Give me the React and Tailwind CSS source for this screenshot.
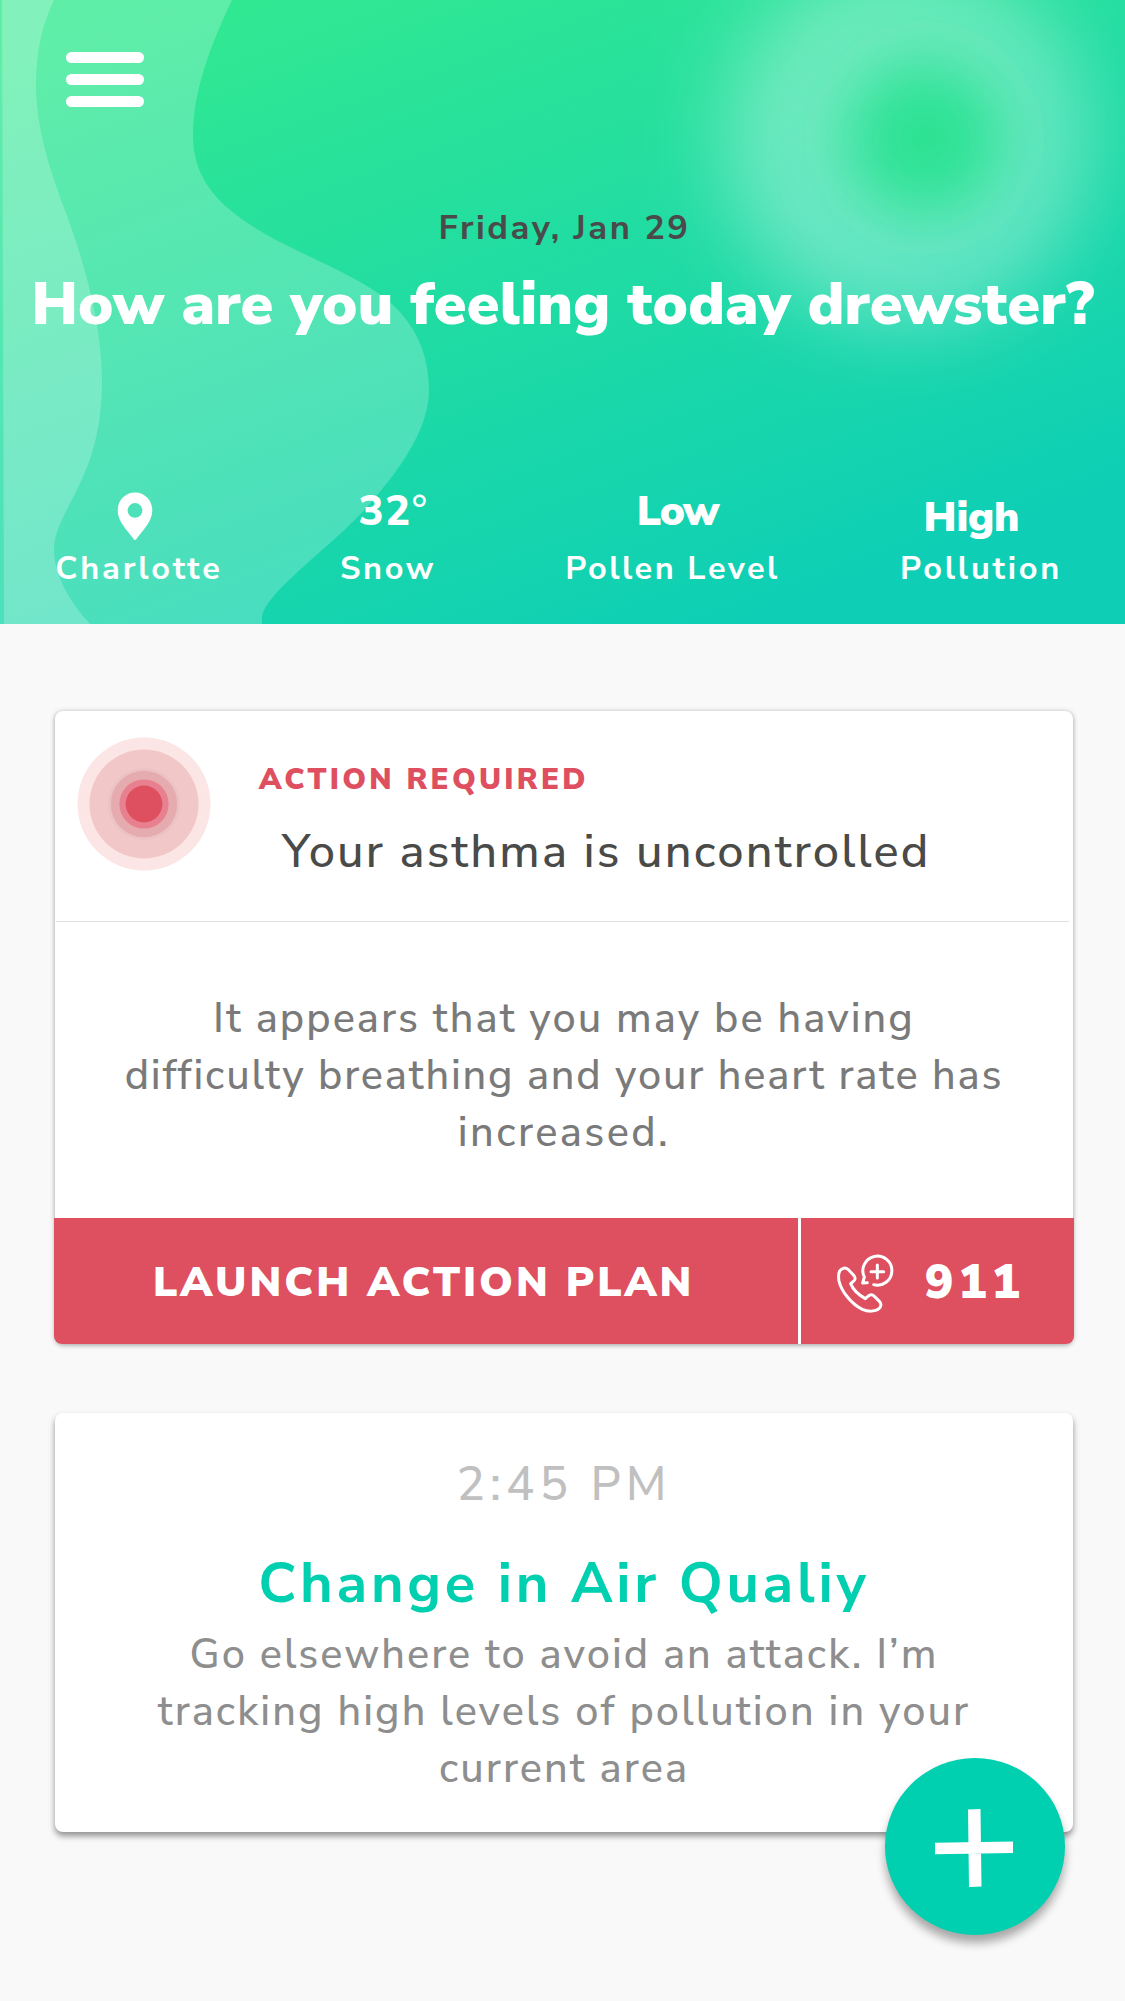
import React from "react";

function HeaderArt() {
  return (
    <svg className="absolute inset-0" width="1125" height="624" viewBox="0 0 1125 624" aria-hidden="true">
      <defs>
        <filter id="haloBlur" x="-60%" y="-60%" width="220%" height="220%">
          <feGaussianBlur stdDeviation="42" />
        </filter>
        <filter id="coreBlur" x="-100%" y="-100%" width="300%" height="300%">
          <feGaussianBlur stdDeviation="33" />
        </filter>
      </defs>
      <path
        d="M232 0C212 42 193 90 193 135C193 185 225 214 286 245C330 267 366 281 393 305C414 325 429 352 429 390C429 425 405 462 379 493C340 543 262 592 262 619L262 624L0 624L0 0Z"
        fill="#fff"
        fillOpacity="0.22"
      />
      <path
        d="M54 0C42 25 36 52 36 83C36 130 50 170 66 213C85 265 102 325 102 382C102 480 54 510 54 550C54 575 70 602 90 624L4 624L2 0Z"
        fill="#fff"
        fillOpacity="0.22"
      />
      <circle cx="905" cy="142" r="182" fill="#fff" fillOpacity="0.35" filter="url(#haloBlur)" />
      <circle cx="925" cy="138" r="78" fill="#2be293" filter="url(#coreBlur)" />
    </svg>
  );
}

function PinIcon() {
  return (
    <svg width="36" height="50" viewBox="0 0 36 50" aria-hidden="true">
      <path
        fillRule="evenodd"
        fill="#fff"
        d="M18 1.5C8.3 1.5 .7 9.3 .7 19.4C.7 31 11 39.500 16.600 48C17.300 49.200 18.700 49.200 19.400 48C25 39.500 35.300 31 35.300 19.400C35.300 9.300 27.700 1.500 18 1.500ZM18 12A7.400 7.400 0 1 1 18 26.800A7.400 7.400 0 1 1 18 12Z"
      />
    </svg>
  );
}

function PhoneIcon() {
  return (
    <svg
      width="80"
      height="84"
      viewBox="0 0 240 252"
      fill="none"
      stroke="#fff"
      strokeWidth="9"
      strokeLinecap="round"
      strokeLinejoin="round"
      aria-hidden="true"
      className="mt-[3px]"
    >
      <path d="M44 90C50 80 62 79 69 85L86 103C93 111 91 117 84 122L77 128C84 146 98 160 121 173L130 165C136 160 143 161 148 166L164 182C170 189 168 198 162 203C150 213 128 212 112 205C80 190 48 150 42 120C40 108 40 98 44 90Z" />
      <path d="M146 131A43.500 43.500 0 1 0 118 108L113 126L127 125" />
      <path d="M157 72V111M138 92H176" />
    </svg>
  );
}

function Pulse() {
  return (
    <svg width="134" height="134" viewBox="-67 -67 134 134" aria-hidden="true">
      <circle r="66.5" fill="#fbe5e5" />
      <circle r="54.5" fill="#f2c7c8" />
      <circle r="36" fill="#ecc3c5" />
      <circle r="33.300" fill="#e6abae" />
      <circle r="24.600" fill="#e9808f" />
      <circle r="18.400" fill="#de4f5f" />
    </svg>
  );
}

export default function App() {
  return (
    <div className="relative flex h-[2001px] w-[1125px] flex-col overflow-hidden bg-[#f9f9f9] font-['Nunito_Sans',Lato,sans-serif] whitespace-nowrap">
      <header className="relative h-[624px] bg-[linear-gradient(160deg,#33e990_5%,#0ecfb5_86%)] text-white">
        <HeaderArt />
        <div className="relative flex flex-col pt-[52px]">
          <button className="ml-[66px] flex w-[78px] flex-col gap-[11px]" aria-label="Menu">
            <span className="h-[11px] w-full rounded-full bg-white" />
            <span className="h-[11px] w-full rounded-full bg-white" />
            <span className="h-[11px] w-full rounded-full bg-white" />
          </button>
          <p className="mt-[101px] pl-[4px] text-center text-[34.5px] leading-[40px] font-bold tracking-[2.500px] text-[#4a4a4a]">
            Friday, Jan 29
          </p>
          <h1 className="mt-[17px] pl-[1px] text-center text-[59px] leading-[80px] font-black tracking-[0.22px]">
            How are you feeling today drewster?
          </h1>
          <div className="mt-[141px] flex text-center">
            <div className="flex w-[276px] flex-col gap-3 pl-[2px]">
              <div className="flex h-[50px] justify-center pt-[5px] pr-[8px]">
                <PinIcon />
              </div>
              <p className="text-[32.5px] leading-[40px] font-bold tracking-[2.850px]">Charlotte</p>
            </div>
            <div className="flex w-[222px] flex-col gap-3">
              <p className="pt-px pl-[13px] text-[42px] leading-[50px] font-extrabold tracking-[1.300px]">
                32<span className="font-medium">°</span>
              </p>
              <p className="-mt-px pl-[2px] text-[32.5px] leading-[40px] font-bold tracking-[2.600px]">Snow</p>
            </div>
            <div className="flex w-[348px] flex-col gap-3">
              <p className="pt-px pl-[11px] text-[42px] leading-[50px] font-black tracking-[-1.400px]">Low</p>
              <p className="-mt-px pl-[1px] text-[32.5px] leading-[40px] font-bold tracking-[2.450px]">Pollen Level</p>
            </div>
            <div className="flex w-[268px] flex-col gap-3">
              <p className="pt-[7px] pr-[17px] text-[42px] leading-[50px] font-black tracking-[-0.200px]">High</p>
              <p className="-mt-[7px] pl-[2px] text-[32.5px] leading-[40px] font-bold tracking-[2.750px]">Pollution</p>
            </div>
          </div>
        </div>
      </header>

      <section className="mt-[87px] mr-[52px] ml-[55px] flex h-[633px] flex-col rounded-lg bg-white shadow-[0_1px_5px_rgba(0,0,0,0.38)]">
        <div className="flex h-[210px]">
          <div className="pt-[26px] pl-[22px]">
            <Pulse />
          </div>
          <div className="pt-[50px] pl-[48px]">
            <p className="text-[29.5px] leading-[36px] font-black tracking-[3.250px] text-[#de4f5f]">
              ACTION REQUIRED
            </p>
            <h2 className="mt-[25px] pl-[23px] text-[47px] leading-[60px] font-medium tracking-[2.150px] text-[#4a4a48]">
              Your asthma is uncontrolled
            </h2>
          </div>
        </div>
        <hr className="mr-[4px] ml-px border-t-[1.500px] border-[#e0e0e0]" />
        <p className="mt-[68px] text-center text-[41.500px] leading-[57px] font-medium text-[#7a7a7a]">
          <span className="block tracking-[2.030px]">It appears that you may be having</span>
          <span className="block tracking-[1.790px]">difficulty breathing and your heart rate has</span>
          <span className="block tracking-[2.400px]">increased.</span>
        </p>
        <div className="-mx-px mt-auto flex h-[126px] overflow-hidden rounded-b-lg bg-[#de4f5f] text-white">
          <button className="flex w-[744px] items-center pt-[2px] pl-[99px] text-[42px] leading-[57px] font-black tracking-[3px]">
            LAUNCH ACTION PLAN
          </button>
          <button className="flex flex-1 items-center border-l-[3px] border-white pl-[24px] text-[47.500px] leading-[60px] font-black tracking-[4.800px]">
            <PhoneIcon />
            <span className="mt-[4px] ml-[20px]">911</span>
          </button>
        </div>
      </section>

      <section className="mt-[69px] mr-[52px] ml-[55px] h-[419px] rounded-lg bg-white pt-[42px] text-center shadow-[0_4px_6px_rgba(0,0,0,0.42)]">
        <p className="text-[47.500px] leading-[60px] font-medium tracking-[5px] text-[#c0c0c0]">2:45 PM</p>
        <h2 className="mt-[34px] text-[56px] leading-[70px] font-bold tracking-[3.700px] text-[#00cfb0]">
          Change in Air Qualiy
        </h2>
        <p className="mt-[7px] text-[41.500px] leading-[57px] font-medium text-[#8e8e8e]">
          <span className="block tracking-[2px]">Go elsewhere to avoid an attack. I’m</span>
          <span className="block tracking-[2.060px]">tracking high levels of pollution in your</span>
          <span className="block tracking-[2.050px]">current area</span>
        </p>
      </section>

      <button
        className="absolute top-[1758px] left-[885px] flex h-[177px] w-[180px] items-center justify-center rounded-[50%] bg-[#00cfb0] shadow-[0_8px_10px_rgba(0,0,0,0.33)]"
        aria-label="Add"
      >
        <svg width="80" height="80" viewBox="0 0 80 80" aria-hidden="true" className="mt-[3px] mr-[2px]">
          <path d="M34 1.500L46.500 1L47.500 78.500L35 79ZM1 34.800L79 33.500L79 45L1 46.300Z" fill="#fff" />
        </svg>
      </button>
    </div>
  );
}
